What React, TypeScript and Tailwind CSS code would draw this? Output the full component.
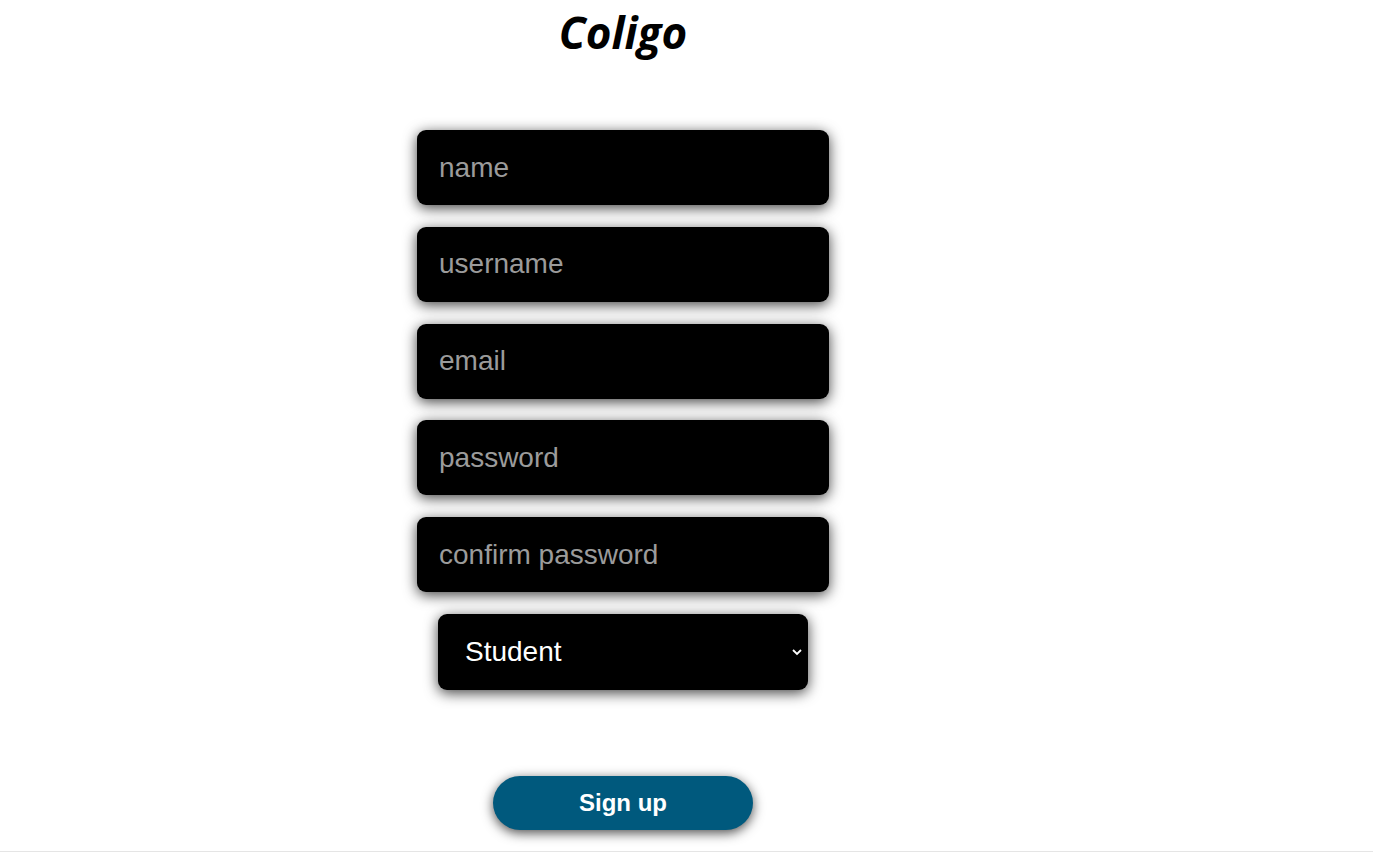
import React, { useState } from 'react';

const fields = ['name', 'username', 'email', 'password', 'confirm password'];

const App: React.FC = () => {
  const [values, setValues] = useState<Record<string, string>>({});
  const [role, setRole] = useState('Student');

  return (
    <div className="min-h-[852px] bg-white border-b border-[#e5e5e5]" style={{ fontFamily: '"Liberation Sans", Arial, sans-serif' }}>
      <div className="w-[1246px] flex flex-col items-center">
        <h1 className="mt-[6px] text-[44px] leading-[52px] font-bold italic text-black" style={{ fontFamily: '"Open Sans", Lato, sans-serif' }}>
          Coligo
        </h1>

        <form className="mt-[72px] flex flex-col items-center gap-[21.75px]" onSubmit={(e) => e.preventDefault()}>
          {fields.map((f) => (
            <input
              key={f}
              type={f.includes('password') ? 'password' : 'text'}
              placeholder={f}
              value={values[f] || ''}
              onChange={(e) => setValues((prev) => ({ ...prev, [f]: e.target.value }))}
              className="w-[412px] h-[75px] rounded-[9px] bg-black pl-[22px] text-[28px] text-white placeholder:text-[#9b9b9b] outline-none shadow-[0_3px_14px_rgba(0,0,0,0.75)]"
            />
          ))}

          <div className="relative w-[370px] h-[76px] rounded-[9px] bg-black shadow-[0_3px_14px_rgba(0,0,0,0.75)]">
            <select
              value={role}
              onChange={(e) => setRole(e.target.value)}
              className="w-full h-full appearance-none bg-transparent pl-[27px] text-[28px] text-white outline-none"
            >
              <option>Student</option>
              <option>Instructor</option>
            </select>
            <svg className="absolute right-[5px] top-[34px] pointer-events-none" width="12" height="8" viewBox="0 0 12 8" fill="none">
              <path d="M2 2l4 4 4-4" stroke="white" strokeWidth="1.8" />
            </svg>
          </div>

          <button
            type="submit"
            className="mt-[64px] w-[260px] h-[54px] rounded-full bg-[#00597d] text-white text-[24px] font-bold shadow-[0_3px_12px_rgba(0,0,0,0.7)]"
          >
            Sign up
          </button>
        </form>
      </div>
    </div>
  );
};

export default App;
